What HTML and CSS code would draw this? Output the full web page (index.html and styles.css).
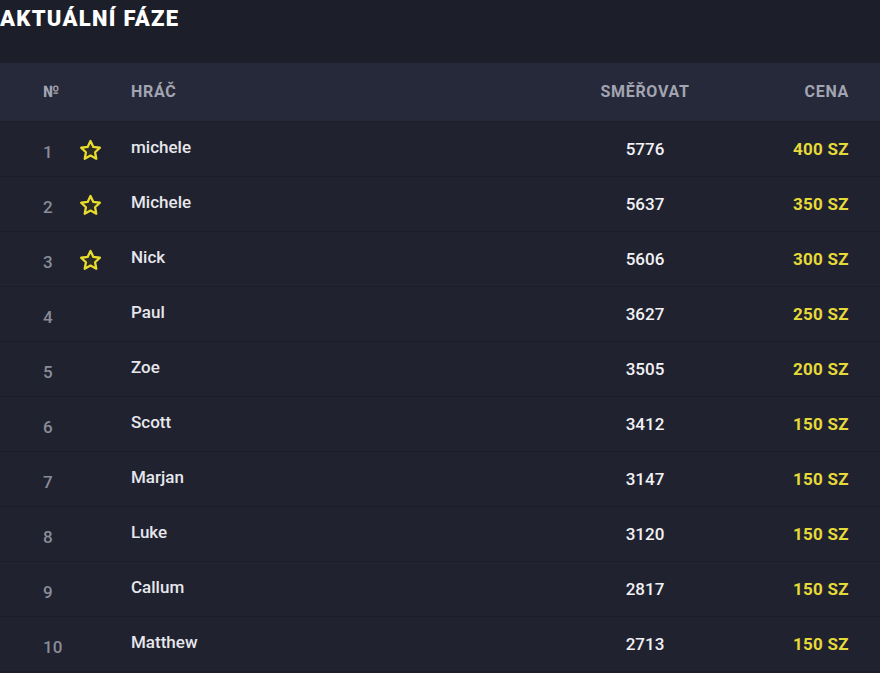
FILE: index.html
```html
<!DOCTYPE html>
<html lang="cs">
<head>
<meta charset="utf-8">
<title>Aktuální fáze</title>
<link rel="stylesheet" href="styles.css">
</head>
<body>
<section class="stage">
  <h1 class="title">AKTUÁLNÍ FÁZE</h1>
  <div class="table">
    <div class="row head">
      <div class="c-rank">№</div>
      <div class="c-star"></div>
      <div class="c-name">HRÁČ</div>
      <div class="c-score">SMĚŘOVAT</div>
      <div class="c-prize">CENA</div>
    </div>
    <div class="row">
      <div class="c-rank">1</div>
      <div class="c-star"><svg class="star" viewBox="0 0 24 24"><path d="M12 2.8l2.75 5.75 6.25.8-4.6 4.35 1.15 6.2L12 16.9l-5.55 3 1.15-6.2L3 9.350l6.25-.8z"/></svg></div>
      <div class="c-name">michele</div>
      <div class="c-score">5776</div>
      <div class="c-prize">400 SZ</div>
    </div>
    <div class="row">
      <div class="c-rank">2</div>
      <div class="c-star"><svg class="star" viewBox="0 0 24 24"><path d="M12 2.8l2.75 5.75 6.25.8-4.6 4.35 1.15 6.2L12 16.9l-5.55 3 1.15-6.2L3 9.35l6.25-.8z"/></svg></div>
      <div class="c-name">Michele</div>
      <div class="c-score">5637</div>
      <div class="c-prize">350 SZ</div>
    </div>
    <div class="row">
      <div class="c-rank">3</div>
      <div class="c-star"><svg class="star" viewBox="0 0 24 24"><path d="M12 2.8l2.75 5.75 6.25.8-4.6 4.35 1.15 6.2L12 16.9l-5.55 3 1.15-6.2L3 9.35l6.25-.8z"/></svg></div>
      <div class="c-name">Nick</div>
      <div class="c-score">5606</div>
      <div class="c-prize">300 SZ</div>
    </div>
    <div class="row">
      <div class="c-rank">4</div>
      <div class="c-star"></div>
      <div class="c-name">Paul</div>
      <div class="c-score">3627</div>
      <div class="c-prize">250 SZ</div>
    </div>
    <div class="row">
      <div class="c-rank">5</div>
      <div class="c-star"></div>
      <div class="c-name">Zoe</div>
      <div class="c-score">3505</div>
      <div class="c-prize">200 SZ</div>
    </div>
    <div class="row">
      <div class="c-rank">6</div>
      <div class="c-star"></div>
      <div class="c-name">Scott</div>
      <div class="c-score">3412</div>
      <div class="c-prize">150 SZ</div>
    </div>
    <div class="row">
      <div class="c-rank">7</div>
      <div class="c-star"></div>
      <div class="c-name">Marjan</div>
      <div class="c-score">3147</div>
      <div class="c-prize">150 SZ</div>
    </div>
    <div class="row">
      <div class="c-rank">8</div>
      <div class="c-star"></div>
      <div class="c-name">Luke</div>
      <div class="c-score">3120</div>
      <div class="c-prize">150 SZ</div>
    </div>
    <div class="row">
      <div class="c-rank">9</div>
      <div class="c-star"></div>
      <div class="c-name">Callum</div>
      <div class="c-score">2817</div>
      <div class="c-prize">150 SZ</div>
    </div>
    <div class="row">
      <div class="c-rank">10</div>
      <div class="c-star"></div>
      <div class="c-name">Matthew</div>
      <div class="c-score">2713</div>
      <div class="c-prize">150 SZ</div>
    </div>
  </div>
</section>
</body>
</html>
```
FILE: styles.css
```css
* { box-sizing: border-box; }
html, body {
  margin: 0;
  padding: 0;
  background: #1c1f2a;
  font-family: Roboto, "Noto Sans", "Liberation Sans", sans-serif;
  overflow: hidden;
}
.stage {
  width: 880px;
  height: 673px;
}
.title {
  margin: 0;
  height: 63px;
  padding: 5px 0 0 0;
  font-size: 22px;
  line-height: 28px;
  font-weight: 900;
  color: #ffffff;
  letter-spacing: 1.3px;
}
.table {
  display: flex;
  flex-direction: column;
  background: #1a1c27;
}
.row {
  display: grid;
  grid-template-columns: 37px 51px 1fr 140px 134px;
  align-items: center;
  height: 55px;
  padding: 0 31px 0 43px;
  background: #20222f;
  border-bottom: 1px solid #1a1c26;
}
.row.head {
  height: 59px;
  background: #262939;
  border-bottom: 1px solid #1c1e29;
}
.head > div {
  font-size: 16px;
  font-weight: 700;
  color: #a2a5b1;
  letter-spacing: 0.7px;
  padding-bottom: 2px;
}
.c-rank {
  font-size: 17px;
  font-weight: 500;
  color: #8a8d99;
  padding-top: 5px;
}
.head .c-rank { padding-top: 0; }
.c-star {
  display: flex;
  align-items: center;
  padding-top: 2px;
}
.star {
  width: 25px;
  height: 25px;
  margin-left: -2px;
  fill: #2e2d24;
  stroke: #e8dc2c;
  stroke-width: 2.2;
  stroke-linejoin: round;
}
.c-name {
  font-size: 17px;
  font-weight: 500;
  color: #e6e7ec;
  padding-bottom: 4px;
}
.c-score {
  text-align: center;
  font-size: 17px;
  font-weight: 500;
  color: #f2f2f5;
}
.c-prize {
  text-align: right;
  font-size: 17px;
  font-weight: 700;
  color: #e6d93a;
  letter-spacing: 0.3px;
}
```
